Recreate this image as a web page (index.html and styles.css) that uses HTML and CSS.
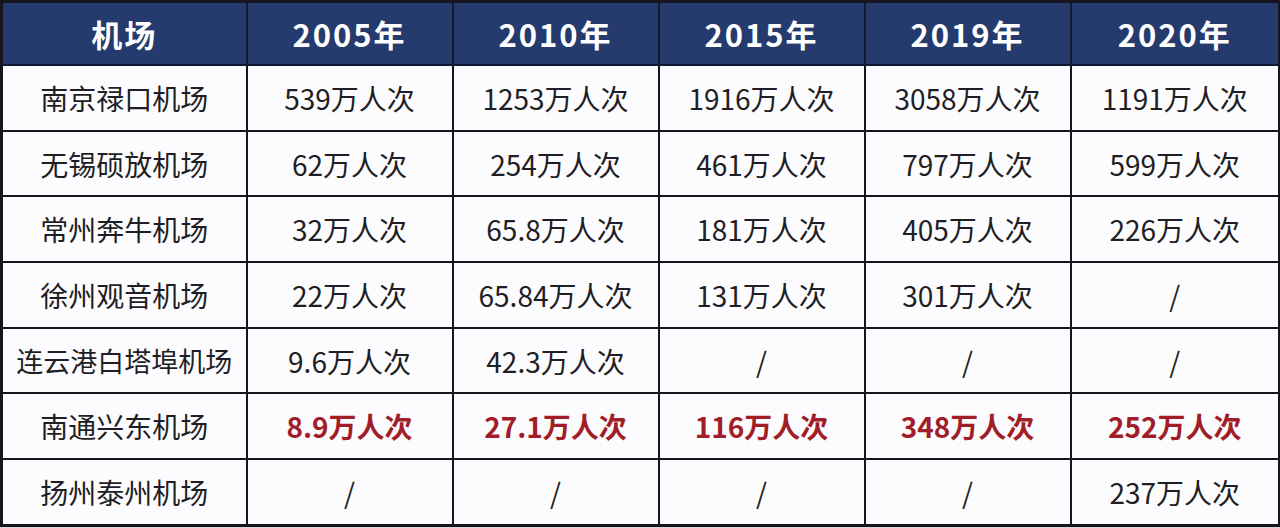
FILE: index.html
```html
<!DOCTYPE html>
<html lang="zh">
<head>
<meta charset="utf-8">
<link rel="stylesheet" href="styles.css">
</head>
<body>
<table class="stats">
  <colgroup>
    <col class="c-name"><col class="c-year"><col class="c-year"><col class="c-year"><col class="c-year"><col class="c-last">
  </colgroup>
  <thead>
    <tr><th>机场</th><th>2005年</th><th>2010年</th><th>2015年</th><th>2019年</th><th>2020年</th></tr>
  </thead>
  <tbody>
    <tr><td>南京禄口机场</td><td>539万人次</td><td>1253万人次</td><td>1916万人次</td><td>3058万人次</td><td>1191万人次</td></tr>
    <tr><td>无锡硕放机场</td><td>62万人次</td><td>254万人次</td><td>461万人次</td><td>797万人次</td><td>599万人次</td></tr>
    <tr><td>常州奔牛机场</td><td>32万人次</td><td>65.8万人次</td><td>181万人次</td><td>405万人次</td><td>226万人次</td></tr>
    <tr><td>徐州观音机场</td><td>22万人次</td><td>65.84万人次</td><td>131万人次</td><td>301万人次</td><td>/</td></tr>
    <tr><td class="long">连云港白塔埠机场</td><td>9.6万人次</td><td>42.3万人次</td><td>/</td><td>/</td><td>/</td></tr>
    <tr class="hl"><td>南通兴东机场</td><td>8.9万人次</td><td>27.1万人次</td><td>116万人次</td><td>348万人次</td><td>252万人次</td></tr>
    <tr><td>扬州泰州机场</td><td>/</td><td>/</td><td>/</td><td>/</td><td>237万人次</td></tr>
  </tbody>
</table>
</body>
</html>
```

FILE: styles.css
```css
html, body {
  margin: 0;
  padding: 0;
  background: #d9d9db;
}
body {
  width: 1280px;
  height: 528px;
  overflow: hidden;
}
.stats {
  border-collapse: collapse;
  table-layout: fixed;
  width: 1278px;
  background: #fcfcfe;
  font-family: "Noto Sans CJK SC", "Noto Sans", sans-serif;
  border: 3px solid #15151f;
}
.c-name { width: 245px; }
.c-year { width: 206px; }
.c-last { width: 209px; }
.stats th,
.stats td {
  border: 2px solid #15151f;
  text-align: center;
  vertical-align: middle;
  padding: 0;
  white-space: nowrap;
}
.stats th {
  height: 61px;
  background: #253a6d;
  color: #ffffff;
  font-size: 31px;
  font-weight: 700;
  letter-spacing: 2px;
  border-color: #111a33;
}
.stats td {
  height: 63.7px;
  color: #1e1e24;
  font-size: 28px;
  font-weight: 400;
}
.stats td.long {
  font-size: 27px;
  letter-spacing: 0;
}
.stats tr.hl td + td {
  color: #a11d27;
  font-weight: 700;
}
```
